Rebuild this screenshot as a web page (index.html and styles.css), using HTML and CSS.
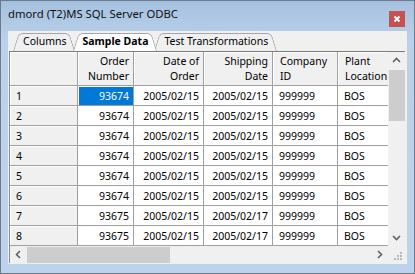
FILE: index.html
```html
<!DOCTYPE html>
<html lang="en">
<head>
  <meta charset="UTF-8">
  <title>dmord (T2)MS SQL Server ODBC</title>
  <link rel="stylesheet" href="styles.css">
</head>
<body>
  <div class="window">
    <div class="titlebar">
      <span class="title">dmord (T2)MS SQL Server ODBC</span>
      <span class="close">
        <svg width="16" height="16" viewBox="0 0 16 16"><path d="M5.5 5.5 L10.5 10.5 M10.5 5.5 L5.5 10.5" stroke="#fff" stroke-width="2"/></svg>
      </span>
    </div>

    <div class="client">
      <div class="tabs">
        <div class="tab">Columns</div>
        <div class="tab active">Sample Data</div>
        <div class="tab">Test Transformations</div>
      </div>

      <div class="grid-frame">
        <div class="viewport">
          <div class="sheet">
            <div class="hd"></div>
            <div class="hd num">Order<br>Number</div>
            <div class="hd num">Date of<br>Order</div>
            <div class="hd num">Shipping<br>Date</div>
            <div class="hd">Company<br>ID</div>
            <div class="hd">Plant<br>Location</div>

            <div class="rh">1</div>
            <div class="cell num"><span class="sel">93674</span></div>
            <div class="cell num">2005/02/15</div>
            <div class="cell num">2005/02/15</div>
            <div class="cell">999999</div>
            <div class="cell">BOS</div>

            <div class="rh">2</div>
            <div class="cell num">93674</div>
            <div class="cell num">2005/02/15</div>
            <div class="cell num">2005/02/15</div>
            <div class="cell">999999</div>
            <div class="cell">BOS</div>

            <div class="rh">3</div>
            <div class="cell num">93674</div>
            <div class="cell num">2005/02/15</div>
            <div class="cell num">2005/02/15</div>
            <div class="cell">999999</div>
            <div class="cell">BOS</div>

            <div class="rh">4</div>
            <div class="cell num">93674</div>
            <div class="cell num">2005/02/15</div>
            <div class="cell num">2005/02/15</div>
            <div class="cell">999999</div>
            <div class="cell">BOS</div>

            <div class="rh">5</div>
            <div class="cell num">93674</div>
            <div class="cell num">2005/02/15</div>
            <div class="cell num">2005/02/15</div>
            <div class="cell">999999</div>
            <div class="cell">BOS</div>

            <div class="rh">6</div>
            <div class="cell num">93674</div>
            <div class="cell num">2005/02/15</div>
            <div class="cell num">2005/02/15</div>
            <div class="cell">999999</div>
            <div class="cell">BOS</div>

            <div class="rh">7</div>
            <div class="cell num">93675</div>
            <div class="cell num">2005/02/15</div>
            <div class="cell num">2005/02/17</div>
            <div class="cell">999999</div>
            <div class="cell">BOS</div>

            <div class="rh">8</div>
            <div class="cell num">93675</div>
            <div class="cell num">2005/02/15</div>
            <div class="cell num">2005/02/17</div>
            <div class="cell">999999</div>
            <div class="cell">BOS</div>
          </div>
        </div>

        <!-- vertical scrollbar -->
        <div class="vscroll">
          <div class="arrow">
            <svg width="17" height="17" viewBox="0 0 17 17"><path d="M5 10 L8.5 6.5 L12 10" fill="none" stroke="#606060" stroke-width="1.6"/></svg>
          </div>
          <div class="vthumb"></div>
          <div class="arrow">
            <svg width="17" height="17" viewBox="0 0 17 17"><path d="M5 7 L8.5 10.5 L12 7" fill="none" stroke="#606060" stroke-width="1.6"/></svg>
          </div>
        </div>

        <!-- horizontal scrollbar -->
        <div class="hscroll">
          <div class="arrow">
            <svg width="17" height="17" viewBox="0 0 17 17"><path d="M10 5 L6.5 8.5 L10 12" fill="none" stroke="#606060" stroke-width="1.6"/></svg>
          </div>
          <div class="hthumb"></div>
          <div class="arrow">
            <svg width="17" height="17" viewBox="0 0 17 17"><path d="M7 5 L10.5 8.5 L7 12" fill="none" stroke="#606060" stroke-width="1.6"/></svg>
          </div>
        </div>

        <div class="corner">
          <svg width="17" height="17" viewBox="0 0 17 17" fill="#b8b8b8">
            <rect x="12" y="6" width="2" height="2"/>
            <rect x="9" y="9" width="2" height="2"/>
            <rect x="12" y="9" width="2" height="2"/>
            <rect x="6" y="12" width="2" height="2"/>
            <rect x="9" y="12" width="2" height="2"/>
            <rect x="12" y="12" width="2" height="2"/>
          </svg>
        </div>
      </div>
    </div>
  </div>
</body>
</html>
```

FILE: styles.css
```css
* {
  margin: 0;
  padding: 0;
  box-sizing: border-box;
}

body {
  font-family: "Segoe UI", "Noto Sans", sans-serif;
  font-size: 10.5px;
  color: #000;
  background: #fff;
}

.window {
  width: 415px;
  height: 274px;
  border: 1px solid #6d7b8d;
  background: linear-gradient(to bottom, #a6c1df, #bad1ea 40px, #bcd3eb);
  display: flex;
  flex-direction: column;
  padding: 0 7px 9px 7px;
}

/* title bar */
.titlebar {
  height: 30px;
  display: flex;
  justify-content: space-between;
  align-items: flex-start;
}

.title {
  font-size: 11.3px;
  line-height: 16px;
  margin-top: 5px;
  color: #111;
}

.close {
  width: 16px;
  height: 16px;
  margin-top: 10px;
  margin-right: 2px;
  background: #c75050;
  display: flex;
}

/* client area */
.client {
  flex: 1;
  background: #f0f0f0;
  padding: 2px 1px 1px 1px;
  display: flex;
  flex-direction: column;
}

.tabs {
  height: 18px;
  display: flex;
  padding-left: 4px;
}

.tab {
  position: relative;
  z-index: 1;
  height: 18px;
  line-height: 17px;
  padding: 0 9px 0 10px;
  margin-right: -3px;
}

.tab::before,
.tab::after {
  content: '';
  position: absolute;
  top: 0;
  bottom: 0;
  width: 50%;
  border-top: 1px solid #a5a5a5;
  background: #f0f0f0;
  z-index: -1;
}

.tab::before {
  left: 0;
  border-left: 1px solid #a5a5a5;
  border-radius: 5px 0 0 0;
  transform: skewX(-17deg);
  transform-origin: bottom left;
}

.tab::after {
  right: 0;
  border-right: 1px solid #a5a5a5;
  border-radius: 0 5px 0 0;
  transform: skewX(17deg);
  transform-origin: bottom right;
}

.tab.active {
  z-index: 2;
  font-weight: bold;
}

.tab.active::before,
.tab.active::after {
  background: #fff;
}

/* grid */
.grid-frame {
  flex: 1;
  display: grid;
  grid-template-columns: 378px 17px;
  grid-template-rows: 194px 17px;
  border-top: 1px solid #7a7a7a;
  border-left: 1px solid #8a8a8a;
  width: 396px;
  position: relative;
  z-index: 3;
}

.viewport {
  overflow: hidden;
  background: #fff;
}

.sheet {
  display: grid;
  grid-template-columns: 68px 56px 70px 69px 65px 70px;
  grid-template-rows: 34px;
  grid-auto-rows: 20px;
  width: 398px;
}

.hd,
.rh,
.cell {
  border-right: 1px solid #a0a0a0;
  border-bottom: 1px solid #a0a0a0;
  white-space: nowrap;
  overflow: hidden;
}

.hd {
  background: #f0f0f0;
  box-shadow: inset 1px 1px 0 #fff;
  line-height: 15px;
  padding: 2px 4px 0 7px;
}

.rh {
  background: #f0f0f0;
  box-shadow: inset 1px 1px 0 #fff;
  line-height: 17px;
  padding: 2px 0 0 6px;
}

.cell {
  background: #fff;
  line-height: 17px;
  padding: 2px 0 0 6px;
}

.num {
  text-align: right;
  padding-left: 0;
  padding-right: 4px;
}

.cell.num {
  position: relative;
}

.sel {
  position: absolute;
  left: 1px;
  top: 1px;
  right: 0;
  bottom: 0;
  background: #0078d7;
  color: #fff;
  padding: 1px 4px 0 0;
}

/* scrollbars */
.vscroll {
  background: #f0f0f0;
  display: flex;
  flex-direction: column;
  justify-content: space-between;
  position: relative;
}

.hscroll {
  background: #f0f0f0;
  display: flex;
  justify-content: space-between;
  position: relative;
}

.arrow {
  width: 17px;
  height: 17px;
  display: flex;
}

.vthumb {
  position: absolute;
  left: 1px;
  right: 0;
  top: 18px;
  height: 51px;
  background: #cdcdcd;
}

.hthumb {
  position: absolute;
  top: 1px;
  bottom: 0;
  left: 17px;
  width: 143px;
  background: #cdcdcd;
}

.corner {
  background: #f0f0f0;
}
```
